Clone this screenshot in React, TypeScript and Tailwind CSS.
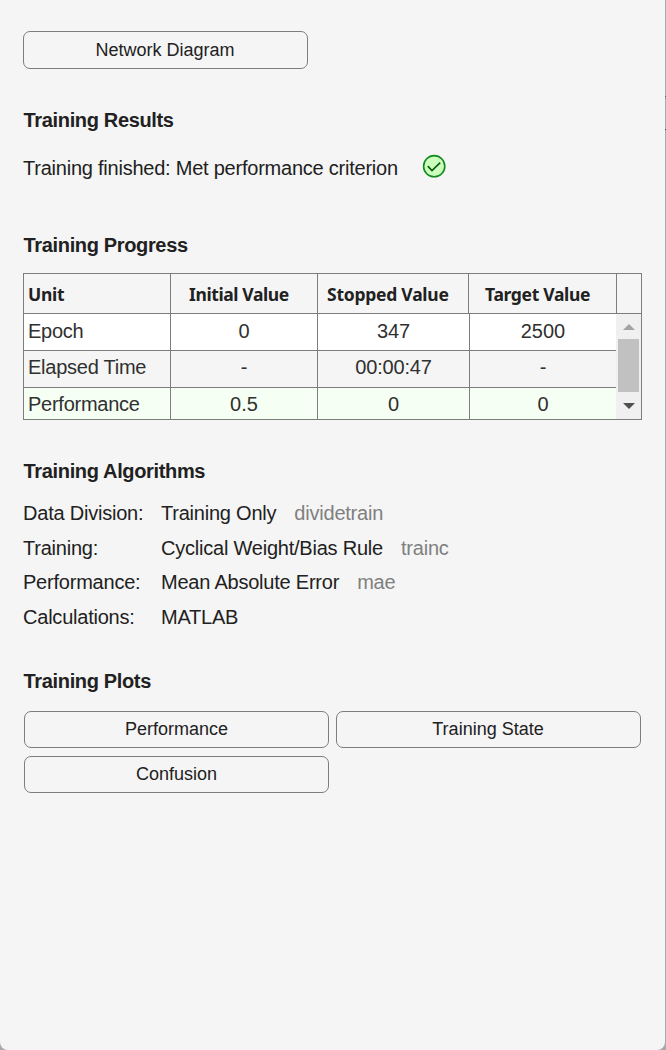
import type { ReactNode } from "react";

function PlotButton({ children, className = "" }: { children: ReactNode; className?: string }) {
  return (
    <button
      className={`flex items-center justify-center rounded-[7px] border border-[#7d7d7d] text-[18px] leading-[20px] text-[#212121] ${className}`}
    >
      {children}
    </button>
  );
}

function Heading({ children, className = "" }: { children: ReactNode; className?: string }) {
  return (
    <h2 className={`pl-[0.6px] text-[20px] leading-[24px] font-bold tracking-[-0.35px] text-[#212121] ${className}`}>
      {children}
    </h2>
  );
}

const rows = [
  { unit: "Epoch", values: ["0", "347", "2500"], style: "h-[37px] bg-white border-b leading-[34px]" },
  { unit: "Elapsed Time", values: ["-", "00:00:47", "-"], style: "h-[37px] bg-[#f5f5f5] border-b leading-[32px]" },
  { unit: "Performance", values: ["0.5", "0", "0"], style: "h-[31px] bg-[#f5fff3] leading-[32px]" },
];

const algorithms = [
  { label: "Data Division:", name: "Training Only", fn: "dividetrain", style: "h-[35px]" },
  { label: "Training:", name: "Cyclical Weight/Bias Rule", fn: "trainc", style: "h-[34px]" },
  { label: "Performance:", name: "Mean Absolute Error", fn: "mae", style: "h-[35px]" },
  { label: "Calculations:", name: "MATLAB", fn: "", style: "h-[35px]" },
];

function ProgressTable() {
  return (
    <div className="mt-[16px] flex h-[147px] w-[619px] flex-col overflow-hidden border border-[#7d7d7d]">
      <div className="grid h-[40px] shrink-0 grid-cols-[147px_147px_151px_148px_24px] border-b border-[#7d7d7d] font-['Noto_Sans','Open_Sans',sans-serif] text-[17.5px] leading-[39px] font-bold text-[#212121]">
        <div className="border-r border-[#7d7d7d] pt-px pl-[4px] leading-[38px] tracking-[-0.25px]">Unit</div>
        <div className="border-r border-[#7d7d7d] pt-px pl-[18px] leading-[38px] tracking-[-0.4px]">Initial Value</div>
        <div className="border-r border-[#7d7d7d] pt-px pl-[9px] leading-[38px] tracking-[-0.25px] whitespace-nowrap">Stopped Value</div>
        <div className="border-r border-[#7d7d7d] pt-px pl-[16px] leading-[38px] tracking-[-0.32px]">Target Value</div>
      </div>
      <div className="flex h-[105px]">
        <div className="w-[592px]">
          {rows.map((row) => (
            <div
              key={row.unit}
              className={`grid grid-cols-[147px_147px_152px_146px] overflow-hidden border-[#7d7d7d] text-[20px] text-[#303030] ${row.style}`}
            >
              <div className="border-r border-[#7d7d7d] pl-[4px] tracking-[-0.25px]">{row.unit}</div>
              <div className="border-r border-[#7d7d7d] text-center">{row.values[0]}</div>
              <div className="border-r border-[#7d7d7d] text-center tracking-[-0.2px]">{row.values[1]}</div>
              <div className="text-center">{row.values[2]}</div>
            </div>
          ))}
        </div>
        <div className="flex w-[25px] flex-col items-center bg-[#f0f0f0]">
          <svg className="mt-[10px] h-[6px] w-[12px]" viewBox="0 0 12 6">
            <path d="M0 6L6 0L12 6Z" fill="#a3a3a3" />
          </svg>
          <div className="mt-[9px] h-[53px] w-[21px] bg-[#c1c1c1]" />
          <svg className="mt-[11px] h-[6px] w-[12px]" viewBox="0 0 12 6">
            <path d="M0 0H12L6 6Z" fill="#505050" />
          </svg>
        </div>
      </div>
    </div>
  );
}

export default function App() {
  return (
    <div className="flex h-[1050px] w-[666px] overflow-hidden bg-[#a9a9a9] font-['Liberation_Sans',Arial,sans-serif]">
      <main className="flex h-[1050px] w-[665px] flex-col rounded-b-[8px] bg-[#f5f5f5] pt-[31px] pl-[23px]">
        <PlotButton className="h-[38px] w-[285px] pr-px">Network Diagram</PlotButton>

        <Heading className="mt-[39px]">Training Results</Heading>
        <div className="mt-[22px] flex h-[26px] items-center text-[20px] text-[#212121]">
          <span className="w-[399px] pt-[2px] tracking-[-0.23px] whitespace-nowrap">
            Training finished: Met performance criterion
          </span>
          <svg className="mb-[2px] h-[24px] w-[24px]" viewBox="0 0 24 24" fill="none">
            <circle cx="12.2" cy="12.2" r="10.6" fill="#ccffbd" stroke="#128a1e" strokeWidth="1.6" />
            <path d="M5.8 12.1L10 16.6L18.2 8.6" stroke="#0b5d13" strokeWidth="1.7" />
          </svg>
        </div>

        <Heading className="mt-[53px]">Training Progress</Heading>
        <ProgressTable />

        <Heading className="mt-[39px]">Training Algorithms</Heading>
        <div className="mt-[18px] text-[20px] leading-[24px] tracking-[-0.22px] text-[#212121]">
          {algorithms.map((item) => (
            <div key={item.label} className={`flex whitespace-nowrap ${item.style}`}>
              <span className="w-[138px]">{item.label}</span>
              <span>{item.name}</span>
              <span className="ml-[18px] text-[#808080]">{item.fn}</span>
            </div>
          ))}
        </div>

        <Heading className="mt-[29px]">Training Plots</Heading>
        <div className="mt-[18px] ml-px grid grid-cols-[305px_305px] gap-x-[7px] gap-y-[8px]">
          <PlotButton className="h-[37px] pb-[2px]">Performance</PlotButton>
          <PlotButton className="h-[37px] pr-px pb-[2px]">Training State</PlotButton>
          <PlotButton className="h-[37px] pb-[2px]">Confusion</PlotButton>
        </div>
      </main>
      <div className="flex w-px flex-col pt-[96px]">
        <div className="h-px bg-[#606060]" />
        <div className="mt-px h-px bg-[#808080]" />
        <div className="mt-[30px] h-px bg-[#404040]" />
      </div>
    </div>
  );
}
